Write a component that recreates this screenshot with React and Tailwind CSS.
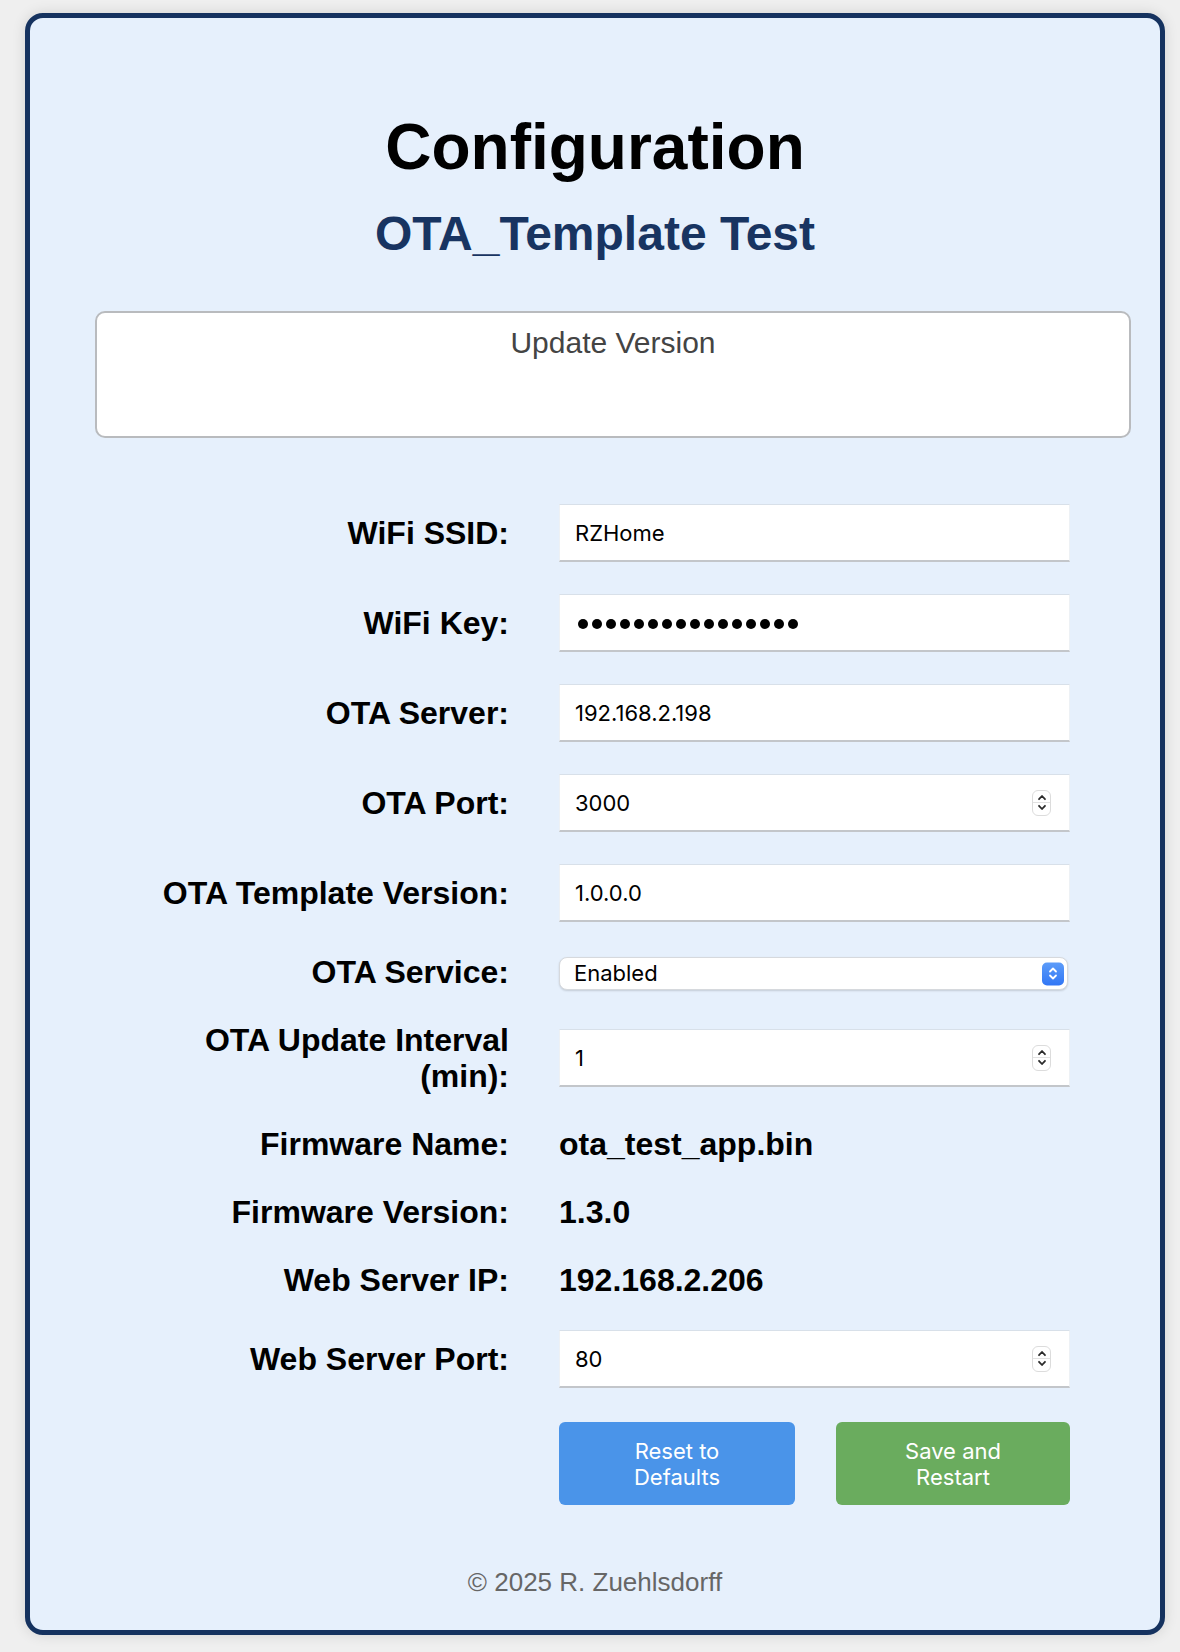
import { useState } from "react";

const labelCls =
  "text-right text-[32px] leading-[36px] font-bold text-black [font-family:'Liberation_Sans',Arial,sans-serif]";
const inputCls =
  "relative flex h-[58px] w-[511px] items-center bg-white pl-[15px] pt-[2px] border-t border-t-[#d8e0e9] border-x border-x-[#edf1f5] border-b-2 border-b-[#c3c6ca] text-[22px] text-black [font-family:Inter,'Noto_Sans',sans-serif]";

const Spinner = () => (
  <div className="absolute right-[18px] top-1/2 flex h-[26px] w-[19px] -translate-y-1/2 flex-col items-center justify-center rounded-[6px] border border-[#dcdcdc] bg-white">
    <svg width="10" height="7" viewBox="0 0 10 7" className="mb-[1px]">
      <path d="M2 5.2 L5 2 L8 5.2" fill="none" stroke="#2b2b2b" strokeWidth="1.8" strokeLinecap="round" strokeLinejoin="round" />
    </svg>
    <div className="h-px w-full bg-[#e2e2e2]" />
    <svg width="10" height="7" viewBox="0 0 10 7" className="mt-[1px]">
      <path d="M2 1.8 L5 5 L8 1.8" fill="none" stroke="#2b2b2b" strokeWidth="1.8" strokeLinecap="round" strokeLinejoin="round" />
    </svg>
  </div>
);

const TextField = ({ value, number }) => (
  <div className={inputCls}>
    <span>{value}</span>
    {number && <Spinner />}
  </div>
);

const PasswordField = ({ length }) => (
  <div className={inputCls}>
    <div className="ml-[3px] flex gap-[4px]">
      {Array.from({ length }).map((_, i) => (
        <span key={i} className="block h-[10px] w-[10px] rounded-full bg-black" />
      ))}
    </div>
  </div>
);

const SelectField = ({ value }) => (
  <div className="relative mt-[3px] flex h-[33px] w-[509px] items-center rounded-[8px] border border-[#d6d9dd] bg-white pl-[14px] text-[22px] text-black shadow-[0_1px_2px_rgba(0,0,0,0.15)] [font-family:Inter,'Noto_Sans',sans-serif]">
    <span>{value}</span>
    <div className="absolute right-[3px] top-1/2 flex h-[23px] w-[22px] -translate-y-1/2 flex-col items-center justify-center rounded-[5px] bg-gradient-to-b from-[#5c9cf9] to-[#3176f5]">
      <svg width="10" height="7" viewBox="0 0 10 7">
        <path d="M2 5 L5 2 L8 5" fill="none" stroke="#fff" strokeWidth="1.8" strokeLinecap="round" strokeLinejoin="round" />
      </svg>
      <svg width="10" height="7" viewBox="0 0 10 7">
        <path d="M2 2 L5 5 L8 2" fill="none" stroke="#fff" strokeWidth="1.8" strokeLinecap="round" strokeLinejoin="round" />
      </svg>
    </div>
  </div>
);

const Value = ({ children }) => (
  <div className="text-[32px] leading-[36px] font-bold text-black [font-family:'Liberation_Sans',Arial,sans-serif]">
    {children}
  </div>
);

export default function App() {
  const [service] = useState("Enabled");

  const rows = [
    { label: "WiFi SSID:", field: <TextField value="RZHome" /> },
    { label: "WiFi Key:", field: <PasswordField length={16} /> },
    { label: "OTA Server:", field: <TextField value="192.168.2.198" /> },
    { label: "OTA Port:", field: <TextField value="3000" number /> },
    { label: "OTA Template Version:", field: <TextField value="1.0.0.0" /> },
    { label: "OTA Service:", field: <SelectField value={service} /> },
    {
      label: (
        <>
          OTA Update Interval
          <br />
          (min):
        </>
      ),
      field: <TextField value="1" number />,
    },
    { label: "Firmware Name:", field: <Value>ota_test_app.bin</Value> },
    { label: "Firmware Version:", field: <Value>1.3.0</Value> },
    { label: "Web Server IP:", field: <Value>192.168.2.206</Value> },
    { label: "Web Server Port:", field: <TextField value="80" number /> },
  ];

  return (
    <div className="min-h-[1652px] w-[1180px] bg-[#efefef] pt-[13px] pb-[17px]">
      <div className="ml-[25px] w-[1140px] rounded-[18px] border-[5px] border-[#15325f] bg-[#e6f0fc] pt-[97px] pb-[35px] shadow-[0_0_14px_rgba(0,0,0,0.12)]">
        <h1 className="text-center text-[64px] leading-[64px] font-bold text-black [font-family:'Liberation_Sans',Arial,sans-serif]">
          Configuration
        </h1>
        <h2 className="mt-[31px] text-center text-[48px] leading-[48px] font-bold text-[#183461] [font-family:'Liberation_Sans',Arial,sans-serif]">
          OTA_Template Test
        </h2>

        <div className="mt-[53px] ml-[65px] h-[127px] w-[1036px] rounded-[10px] border-2 border-[#b9bbbe] bg-white pt-[15px] text-center text-[30px] leading-[30px] text-[#444] [font-family:'Liberation_Sans',Arial,sans-serif]">
          Update Version
        </div>

        <div className="mt-[66px] ml-[100px] grid grid-cols-[379px_511px] items-center gap-x-[50px] gap-y-[32px]">
          {rows.map((row, i) => (
            <div key={i} className="contents">
              <div className={labelCls}>{row.label}</div>
              <div>{row.field}</div>
            </div>
          ))}
          <div />
          <div className="mt-[2px] grid grid-cols-[236px_234px] gap-x-[41px]">
            <button className="h-[83px] rounded-[6px] bg-[#4a94e9] text-[22px] leading-[26px] text-white [font-family:Inter,'Noto_Sans',sans-serif]">
              Reset to
              <br />
              Defaults
            </button>
            <button className="h-[83px] rounded-[6px] bg-[#6aac5e] text-[22px] leading-[26px] text-white [font-family:Inter,'Noto_Sans',sans-serif]">
              Save and
              <br />
              Restart
            </button>
          </div>
        </div>

        <div className="mt-[64px] text-center text-[26px] leading-[26px] text-[#666] [font-family:'Liberation_Sans',Arial,sans-serif]">
          © 2025 R. Zuehlsdorff
        </div>
      </div>
    </div>
  );
}
